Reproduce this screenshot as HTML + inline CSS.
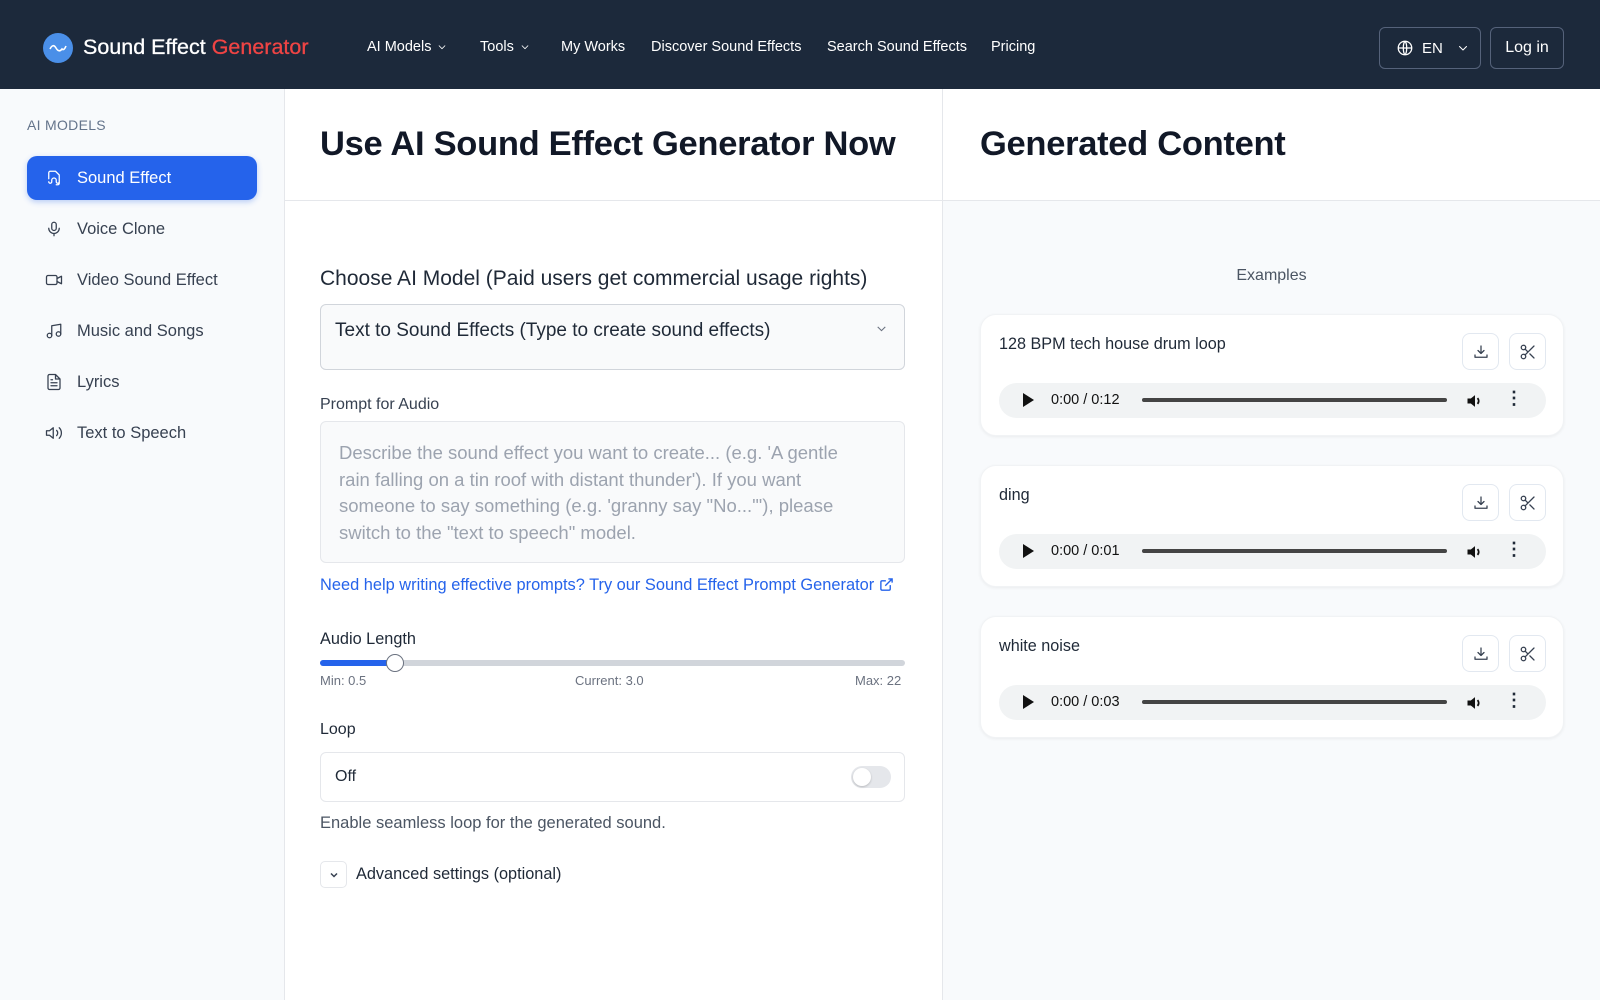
<!DOCTYPE html>
<html><head><meta charset="utf-8"><style>
*{box-sizing:border-box;margin:0;padding:0}
body{width:1600px;height:1000px;overflow:hidden;font-family:"Liberation Sans",Arial,sans-serif;background:#fff;position:relative;color:#1f2937}
.a{position:absolute}
.hdr{left:0;top:0;width:1600px;height:89px;background:#1c293b}
.nav{color:#fff;font-size:14.5px;top:39px;white-space:nowrap;display:flex;align-items:center;gap:6px}
.side{left:0;top:89px;width:285px;height:911px;background:#f8fafc;border-right:1px solid #e5e7eb}
.item{left:27px;width:230px;height:44px;border-radius:10px;font-size:16.5px;color:#374151;display:flex;align-items:center;padding-left:18px;gap:14px}
.item svg{width:18px;height:18px;fill:none;stroke:currentColor;stroke-width:1.7;stroke-linecap:round;stroke-linejoin:round}
.card{left:980px;width:584px;height:122px;background:#fff;border-radius:16px;box-shadow:0 1px 3px rgba(0,0,0,.06);border:1px solid #f1f3f5}
.ct{left:18px;top:20px;font-size:16.2px;color:#1f2937}
.ib{top:18px;width:37px;height:37px;border:1px solid #e2e8f0;border-radius:8px;display:flex;align-items:center;justify-content:center}
.ib svg{width:18px;height:18px;fill:none;stroke:#374151;stroke-width:1.7;stroke-linecap:round;stroke-linejoin:round}
.aud{left:18px;top:68px;width:547px;height:35px;background:#f1f3f4;border-radius:18px}
.chev{fill:none;stroke:#fff;stroke-width:2;stroke-linecap:round;stroke-linejoin:round}
</style></head><body>
<div class="a hdr"></div>
<div class="a" style="left:43px;top:33px;width:30px;height:30px;border-radius:50%;background:#4a8fe8"><svg width="30" height="30" viewBox="0 0 30 30"><path d="M7 16 Q10 10 13 15 T19 16 Q21 18 23 13" fill="none" stroke="#fff" stroke-width="1.6"/></svg></div>
<div class="a" style="left:83px;top:35px;font-size:21.5px;color:#fff;white-space:nowrap;-webkit-text-stroke:.3px #fff">Sound Effect <span style="color:#ef4444;-webkit-text-stroke:.3px #ef4444">Generator</span></div>
<div class="a nav" style="left:367px">AI Models <svg width="10" height="10" viewBox="0 0 24 24" class="chev"><path d="M5 9l7 7 7-7"/></svg></div>
<div class="a nav" style="left:480px">Tools <svg width="10" height="10" viewBox="0 0 24 24" class="chev"><path d="M5 9l7 7 7-7"/></svg></div>
<div class="a nav" style="left:561px">My Works</div>
<div class="a nav" style="left:651px">Discover Sound Effects</div>
<div class="a nav" style="left:827px">Search Sound Effects</div>
<div class="a nav" style="left:991px">Pricing</div>
<div class="a" style="left:1379px;top:27px;width:102px;height:42px;border:1px solid #55627a;border-radius:6px;color:#fff;font-size:15px;display:flex;align-items:center;padding-left:16px;gap:8px"><svg width="18" height="18" viewBox="0 0 24 24" fill="none" stroke="#fff" stroke-width="1.7"><circle cx="12" cy="12" r="9"/><path d="M3 12h18M12 3c3 3 3 15 0 18M12 3c-3 3-3 15 0 18"/></svg>EN <svg width="12" height="12" viewBox="0 0 24 24" class="chev" style="margin-left:6px"><path d="M5 9l7 7 7-7"/></svg></div>
<div class="a" style="left:1490px;top:27px;width:74px;height:42px;border:1px solid #55627a;border-radius:6px;color:#fff;font-size:16px;display:flex;align-items:center;justify-content:center">Log in</div>

<div class="a side"></div>
<div class="a" style="left:27px;top:117px;font-size:14px;color:#64748b;letter-spacing:.3px">AI MODELS</div>
<div class="a item" style="top:156px;background:#2563eb;color:#fff;box-shadow:0 2px 6px rgba(37,99,235,.3)"><svg viewBox="0 0 24 24"><path d="M14 3H7a2 2 0 0 0-2 2v8M14 3l5 5v11a2 2 0 0 1-2 2h-2M5 17a2 2 0 1 0 4 0v-2a3 3 0 0 1 6 0v2a2 2 0 1 0 4 0"/></svg>Sound Effect</div>
<div class="a item" style="top:207px"><svg viewBox="0 0 24 24"><rect x="9" y="3" width="6" height="11" rx="3"/><path d="M5 11a7 7 0 0 0 14 0M12 18v3"/></svg>Voice Clone</div>
<div class="a item" style="top:258px"><svg viewBox="0 0 24 24"><rect x="2" y="6" width="14" height="12" rx="2"/><path d="M16 10l6-3v10l-6-3"/></svg>Video Sound Effect</div>
<div class="a item" style="top:309px"><svg viewBox="0 0 24 24"><path d="M9 18V5l12-2v13"/><circle cx="6" cy="18" r="3"/><circle cx="18" cy="16" r="3"/></svg>Music and Songs</div>
<div class="a item" style="top:360px"><svg viewBox="0 0 24 24"><path d="M14 2H6a2 2 0 0 0-2 2v16a2 2 0 0 0 2 2h12a2 2 0 0 0 2-2V8zM14 2v6h6M8 13h8M8 17h8M8 9h2"/></svg>Lyrics</div>
<div class="a item" style="top:411px"><svg viewBox="0 0 24 24"><path d="M11 5L6 9H2v6h4l5 4zM15.5 8.5a5 5 0 0 1 0 7M19 5a10 10 0 0 1 0 14"/></svg>Text to Speech</div>

<div class="a" style="left:285px;top:200px;width:657px;height:1px;background:#e5e7eb"></div>
<div class="a" style="left:942px;top:89px;width:1px;height:911px;background:#e5e7eb"></div>
<div class="a" style="left:942px;top:200px;width:658px;height:1px;background:#e5e7eb"></div>
<div class="a" style="left:943px;top:201px;width:657px;height:799px;background:#f8fafc"></div>
<div class="a" style="left:320px;top:125px;font-size:34.5px;font-weight:bold;color:#111827;letter-spacing:-.3px">Use AI Sound Effect Generator Now</div>
<div class="a" style="left:980px;top:125px;font-size:34.5px;font-weight:bold;color:#111827;letter-spacing:-.3px">Generated Content</div>

<div class="a" style="left:320px;top:267px;font-size:21px;color:#1f2937">Choose AI Model (Paid users get commercial usage rights)</div>
<div class="a" style="left:320px;top:304px;width:585px;height:66px;border:1px solid #d1d5db;border-radius:6px;background:#f9fafb;font-size:19px;padding:15px 14px;color:#1f2937">Text to Sound Effects (Type to create sound effects)<svg width="13" height="13" viewBox="0 0 24 24" style="position:absolute;right:16px;top:17px;fill:none;stroke:#6b7280;stroke-width:2"><path d="M5 9l7 7 7-7"/></svg></div>
<div class="a" style="left:320px;top:396px;font-size:16px;color:#374151">Prompt for Audio</div>
<div class="a" style="left:320px;top:421px;width:585px;height:142px;border:1px solid #e5e7eb;border-radius:6px;background:#f9fafb;font-size:18.5px;line-height:26.5px;padding:18px 40px 18px 18px;color:#9ca3af">Describe the sound effect you want to create... (e.g. 'A gentle rain falling on a tin roof with distant thunder'). If you want someone to say something (e.g. 'granny say "No..."'), please switch to the "text to speech" model.</div>
<div class="a" style="left:320px;top:576px;font-size:16.4px;color:#2563eb">Need help writing effective prompts? Try our Sound Effect Prompt Generator <svg width="15" height="15" viewBox="0 0 24 24" fill="none" stroke="#2563eb" stroke-width="2.2" style="vertical-align:-2px"><path d="M18 13v6a2 2 0 0 1-2 2H5a2 2 0 0 1-2-2V8a2 2 0 0 1 2-2h6M15 3h6v6M10 14L21 3"/></svg></div>
<div class="a" style="left:320px;top:630px;font-size:16.3px;color:#1f2937">Audio Length</div>
<div class="a" style="left:320px;top:660px;width:585px;height:6px;border-radius:3px;background:#d1d5db"></div>
<div class="a" style="left:320px;top:660px;width:75px;height:6px;border-radius:3px;background:#2563eb"></div>
<div class="a" style="left:386px;top:654px;width:18px;height:18px;border-radius:50%;background:#fff;border:1.5px solid #6b7280"></div>
<div class="a" style="left:320px;top:673px;font-size:13px;color:#6b7280">Min: 0.5</div>
<div class="a" style="left:575px;top:673px;font-size:13px;color:#6b7280">Current: 3.0</div>
<div class="a" style="left:855px;top:673px;font-size:13px;color:#6b7280">Max: 22</div>
<div class="a" style="left:320px;top:721px;font-size:16px;color:#1f2937">Loop</div>
<div class="a" style="left:320px;top:752px;width:585px;height:50px;border:1px solid #e5e7eb;border-radius:6px;font-size:16px;padding:15px 14px;color:#1f2937">Off<div class="a" style="right:13px;top:13px;width:40px;height:22px;border-radius:11px;background:#e5e7eb"><div class="a" style="left:2px;top:2px;width:18px;height:18px;border-radius:50%;background:#fff;box-shadow:0 1px 2px rgba(0,0,0,.2)"></div></div></div>
<div class="a" style="left:320px;top:814px;font-size:16.5px;color:#4b5563">Enable seamless loop for the generated sound.</div>
<div class="a" style="left:320px;top:861px;width:27px;height:27px;border:1px solid #e5e7eb;border-radius:5px;display:flex;align-items:center;justify-content:center"><svg width="12" height="12" viewBox="0 0 24 24" fill="none" stroke="#374151" stroke-width="3"><path d="M6 9l6 6 6-6"/></svg></div>
<div class="a" style="left:356px;top:865px;font-size:16.3px;color:#1f2937">Advanced settings (optional)</div>

<div class="a" style="left:943px;top:267px;width:657px;text-align:center;font-size:16px;color:#4b5563">Examples</div>

<div class="a card" style="top:314px"><div class="a ct">128 BPM tech house drum loop</div>
<div class="a ib" style="left:481px"><svg viewBox="0 0 24 24"><path d="M12 4v10M8 10l4 4 4-4M4 16v3h16v-3"/></svg></div>
<div class="a ib" style="left:528px"><svg viewBox="0 0 24 24"><circle cx="6" cy="6" r="3"/><circle cx="6" cy="18" r="3"/><path d="M20 4L8.1 15.9M14.5 14.5L20 20M8.1 8.1L12 12"/></svg></div>
<div class="a aud"><span class="a" style="left:24px;top:10px;width:0;height:0;border-left:11px solid #111;border-top:7px solid transparent;border-bottom:7px solid transparent"></span><span class="a" style="left:52px;top:9px;font-size:14.5px;color:#111">0:00 / 0:12</span><span class="a" style="left:143px;top:15px;width:305px;height:4px;border-radius:2px;background:#444"></span><svg class="a" style="left:466px;top:8px" width="20" height="20" viewBox="0 0 24 24"><path d="M3 9h4l5-4v14l-5-4H3z" fill="#111"/><path d="M15 8.5a5 5 0 0 1 0 7" fill="none" stroke="#111" stroke-width="2.2"/></svg><span class="a" style="left:506px;top:5px;font-size:18px;font-weight:bold">&#8942;</span></div></div>

<div class="a card" style="top:465px"><div class="a ct">ding</div>
<div class="a ib" style="left:481px"><svg viewBox="0 0 24 24"><path d="M12 4v10M8 10l4 4 4-4M4 16v3h16v-3"/></svg></div>
<div class="a ib" style="left:528px"><svg viewBox="0 0 24 24"><circle cx="6" cy="6" r="3"/><circle cx="6" cy="18" r="3"/><path d="M20 4L8.1 15.9M14.5 14.5L20 20M8.1 8.1L12 12"/></svg></div>
<div class="a aud"><span class="a" style="left:24px;top:10px;width:0;height:0;border-left:11px solid #111;border-top:7px solid transparent;border-bottom:7px solid transparent"></span><span class="a" style="left:52px;top:9px;font-size:14.5px;color:#111">0:00 / 0:01</span><span class="a" style="left:143px;top:15px;width:305px;height:4px;border-radius:2px;background:#444"></span><svg class="a" style="left:466px;top:8px" width="20" height="20" viewBox="0 0 24 24"><path d="M3 9h4l5-4v14l-5-4H3z" fill="#111"/><path d="M15 8.5a5 5 0 0 1 0 7" fill="none" stroke="#111" stroke-width="2.2"/></svg><span class="a" style="left:506px;top:5px;font-size:18px;font-weight:bold">&#8942;</span></div></div>

<div class="a card" style="top:616px"><div class="a ct">white noise</div>
<div class="a ib" style="left:481px"><svg viewBox="0 0 24 24"><path d="M12 4v10M8 10l4 4 4-4M4 16v3h16v-3"/></svg></div>
<div class="a ib" style="left:528px"><svg viewBox="0 0 24 24"><circle cx="6" cy="6" r="3"/><circle cx="6" cy="18" r="3"/><path d="M20 4L8.1 15.9M14.5 14.5L20 20M8.1 8.1L12 12"/></svg></div>
<div class="a aud"><span class="a" style="left:24px;top:10px;width:0;height:0;border-left:11px solid #111;border-top:7px solid transparent;border-bottom:7px solid transparent"></span><span class="a" style="left:52px;top:9px;font-size:14.5px;color:#111">0:00 / 0:03</span><span class="a" style="left:143px;top:15px;width:305px;height:4px;border-radius:2px;background:#444"></span><svg class="a" style="left:466px;top:8px" width="20" height="20" viewBox="0 0 24 24"><path d="M3 9h4l5-4v14l-5-4H3z" fill="#111"/><path d="M15 8.5a5 5 0 0 1 0 7" fill="none" stroke="#111" stroke-width="2.2"/></svg><span class="a" style="left:506px;top:5px;font-size:18px;font-weight:bold">&#8942;</span></div></div>
</body></html>
